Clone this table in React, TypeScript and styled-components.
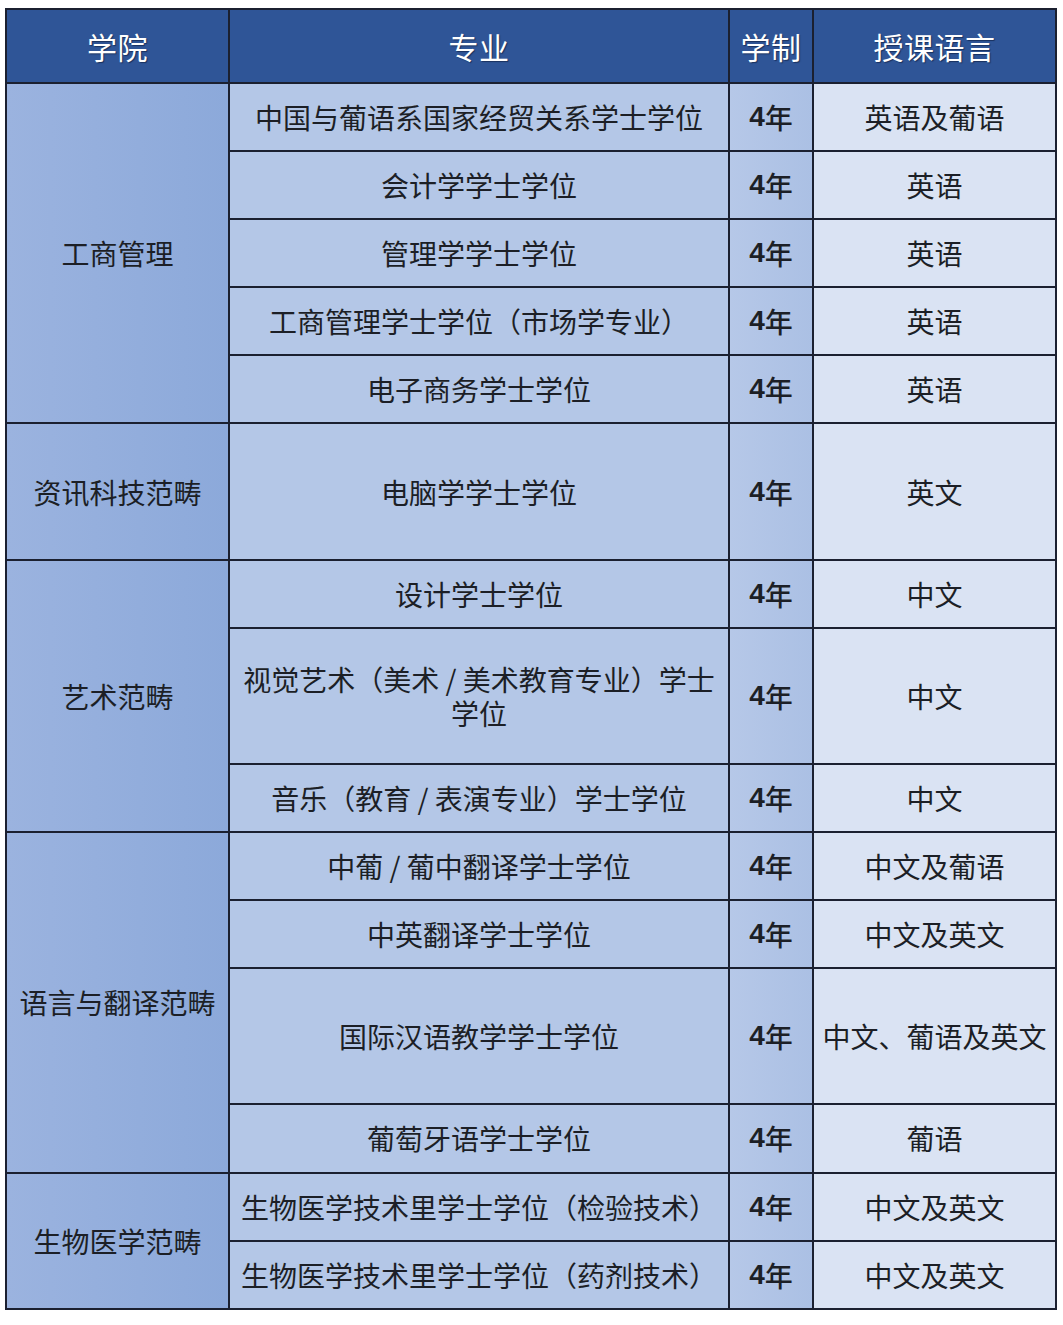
import styled, { createGlobalStyle } from 'styled-components';
import { FC } from 'react';

const GlobalStyle = createGlobalStyle`
    html, body {
        margin:0;
        padding:0;
        background:#ffffff;
    }
    body {
        padding:8px 6px 0 5px;
        font-family: "Noto Sans CJK SC", "Noto Sans", sans-serif;
    }
`;

const UNIT = 66.1;
const GAP = 2;
const LINE = '#1b2030';

const Table = styled.div`
    width:1052px;
    display:flex;
    flex-direction:column;
    gap:${GAP}px;
    padding:${GAP}px;
    box-sizing:border-box;
    background:${LINE};
`;

const HeaderRow = styled.div`
    display:grid;
    grid-template-columns:221px 498px 82px 241px;
    gap:${GAP}px;
    height:72px;
`;

const HeaderCell = styled.div`
    background:#2f5597;
    color:#ffffff;
    font-size:30px;
    display:flex;
    align-items:center;
    justify-content:center;
    text-shadow:1px 1px 1px rgba(10, 20, 50, 0.55);
    letter-spacing:0.5px;
`;

const Group = styled.div`
    display:grid;
    grid-template-columns:221px 1fr;
    gap:${GAP}px;
`;

const College = styled.div`
    background:linear-gradient(90deg, #9bb3df 0%, #8ca9da 100%);
    color:#1c1f26;
    font-size:28px;
    display:flex;
    align-items:center;
    justify-content:center;
    text-align:center;
`;

const Majors = styled.div`
    display:flex;
    flex-direction:column;
    gap:${GAP}px;
`;

const MajorRow = styled.div<{ $units: number }>`
    display:grid;
    grid-template-columns:498px 82px 241px;
    gap:${GAP}px;
    height:${p => p.$units * UNIT + (p.$units - 1) * GAP}px;
`;

const Cell = styled.div<{ $bg: string }>`
    background:${p => p.$bg};
    color:#1c1f26;
    font-size:28px;
    line-height:34px;
    display:flex;
    align-items:center;
    justify-content:center;
    text-align:center;
    padding:0 8px;
`;

const Years = styled(Cell)`
    font-family:"Liberation Sans", "Noto Sans CJK SC", sans-serif;
    & b {
        font-weight:700;
    }
    & span {
        font-family:"Noto Sans CJK SC", sans-serif;
        font-weight:500;
    }
`;

interface IMajor {
    name: string;
    lang: string;
    units?: number;
}

interface IGroup {
    college: string;
    majors: IMajor[];
}

const data: IGroup[] = [
    {
        college: '工商管理',
        majors: [
            { name: '中国与葡语系国家经贸关系学士学位', lang: '英语及葡语' },
            { name: '会计学学士学位', lang: '英语' },
            { name: '管理学学士学位', lang: '英语' },
            { name: '工商管理学士学位（市场学专业）', lang: '英语' },
            { name: '电子商务学士学位', lang: '英语' },
        ],
    },
    {
        college: '资讯科技范畴',
        majors: [{ name: '电脑学学士学位', lang: '英文', units: 2 }],
    },
    {
        college: '艺术范畴',
        majors: [
            { name: '设计学士学位', lang: '中文' },
            { name: '视觉艺术（美术 / 美术教育专业）学士学位', lang: '中文', units: 2 },
            { name: '音乐（教育 / 表演专业）学士学位', lang: '中文' },
        ],
    },
    {
        college: '语言与翻译范畴',
        majors: [
            { name: '中葡 / 葡中翻译学士学位', lang: '中文及葡语' },
            { name: '中英翻译学士学位', lang: '中文及英文' },
            { name: '国际汉语教学学士学位', lang: '中文、葡语及英文', units: 2 },
            { name: '葡萄牙语学士学位', lang: '葡语' },
        ],
    },
    {
        college: '生物医学范畴',
        majors: [
            { name: '生物医学技术里学士学位（检验技术）', lang: '中文及英文' },
            { name: '生物医学技术里学士学位（药剂技术）', lang: '中文及英文' },
        ],
    },
];

const App: FC = () => {
    return (
        <>
            <GlobalStyle />
            <Table>
                <HeaderRow>
                    <HeaderCell>学院</HeaderCell>
                    <HeaderCell>专业</HeaderCell>
                    <HeaderCell>学制</HeaderCell>
                    <HeaderCell>授课语言</HeaderCell>
                </HeaderRow>
                {data.map(group => (
                    <Group key={group.college}>
                        <College>{group.college}</College>
                        <Majors>
                            {group.majors.map(m => (
                                <MajorRow key={m.name} $units={m.units ?? 1}>
                                    <Cell $bg="#b4c7e7">{m.name}</Cell>
                                    <Years $bg="linear-gradient(90deg, #b6c8e8 0%, #abc0e4 100%)">
                                        <b>4</b><span>年</span>
                                    </Years>
                                    <Cell $bg="#dae3f3">{m.lang}</Cell>
                                </MajorRow>
                            ))}
                        </Majors>
                    </Group>
                ))}
            </Table>
        </>
    );
};

export default App;
